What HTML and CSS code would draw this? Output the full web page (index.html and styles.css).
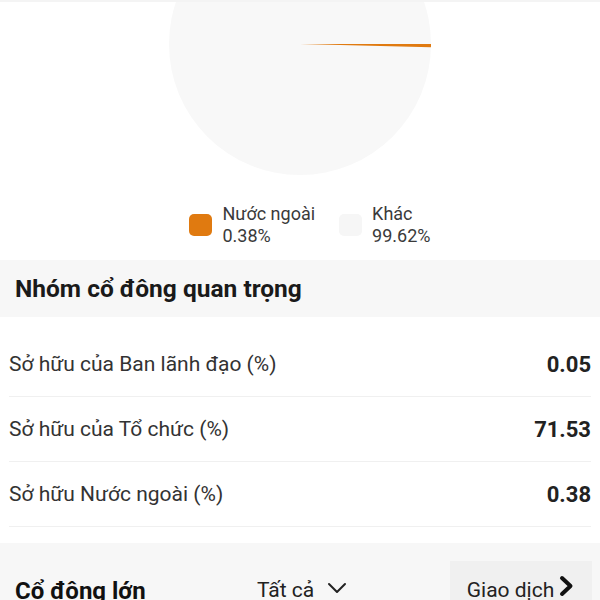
FILE: index.html
```html
<!DOCTYPE html>
<html lang="vi">
<head>
  <meta charset="UTF-8" />
  <title>Cổ đông</title>
  <meta name="viewport" content="width=device-width, initial-scale=1" />
  <link rel="stylesheet" href="styles.css">
</head>
<body>
  <div class="pie-wrap">
    <svg class="pie" width="262" height="262" viewBox="0 0 262 262">
      <circle cx="131" cy="131" r="131" fill="#f8f8f8" />
      <!-- 0.38% wedge -->
      <path d="M131 131 L262 131 A131 131 0 0 1 261.96 134.13 Z" fill="#e07a10" />
    </svg>
  </div>

  <div class="legend">
    <div class="legend-item">
      <span class="swatch orange"></span>
      <div class="legend-text">
        <div>Nước ngoài</div>
        <div>0.38%</div>
      </div>
    </div>
    <div class="legend-item">
      <span class="swatch grey"></span>
      <div class="legend-text">
        <div>Khác</div>
        <div>99.62%</div>
      </div>
    </div>
  </div>

  <div class="section-head">Nhóm cổ đông quan trọng</div>

  <div class="rows">
    <div class="row"><span>Sở hữu của Ban lãnh đạo (%)</span><b>0.05</b></div>
    <div class="row"><span>Sở hữu của Tổ chức (%)</span><b>71.53</b></div>
    <div class="row"><span>Sở hữu Nước ngoài (%)</span><b>0.38</b></div>
  </div>

  <div class="big-holders">
    <div class="bh-title">Cổ đông lớn</div>
    <div class="bh-filter">Tất cả
      <svg width="20" height="12" viewBox="0 0 20 12"><path d="M2 2 L10 10 L18 2" fill="none" stroke="#222" stroke-width="2" stroke-linecap="round" stroke-linejoin="round" /></svg>
    </div>
    <div class="bh-trade">Giao dịch
      <svg width="17" height="22" viewBox="0 0 17 22"><path d="M4 3 L12.5 11 L4 19" fill="none" stroke="#111" stroke-width="4" stroke-linecap="round" stroke-linejoin="round" /></svg>
    </div>
  </div>
</body>
</html>
```

FILE: styles.css
```css
body {
  margin: 0;
  background: #fff;
  font-family: Roboto, "Noto Sans", sans-serif;
  color: #222;
  overflow: hidden;
}
.pie-wrap {
  height: 175px;
  overflow: hidden;
  display: flex;
  justify-content: center;
  border-top: 2px solid #f4f4f4;
  box-sizing: border-box;
}
.pie {
  margin-top: -89px;
  flex-shrink: 0;
}
.legend {
  display: flex;
  justify-content: center;
  gap: 24px;
  margin-top: 28px;
  padding-left: 20px;
}
.legend-item {
  display: flex;
  align-items: center;
  gap: 10px;
}
.swatch {
  width: 23px;
  height: 22px;
  border-radius: 5px;
}
.swatch.orange {
  background: #e07a10;
}
.swatch.grey {
  background: #f6f6f6;
}
.legend-text {
  font-size: 18px;
  line-height: 22px;
  color: #3a3a3a;
}
.section-head {
  margin-top: 13px;
  height: 57px;
  background: #f7f7f7;
  display: flex;
  align-items: center;
  padding: 0 15px;
  font-size: 24.5px;
  font-weight: 700;
  color: #1a1a1a;
}
.rows {
  padding: 15px 9px 0 9px;
}
.row {
  height: 64px;
  display: flex;
  align-items: center;
  justify-content: space-between;
  border-bottom: 1px solid #f0f0f0;
  font-size: 21px;
  color: #333;
}
.row b {
  font-size: 22px;
  font-weight: 700;
  color: #222;
}
.big-holders {
  margin-top: 16px;
  background: #f7f7f7;
  display: flex;
  align-items: stretch;
  padding: 18px 8px 0 15px;
  height: 60px;
  box-sizing: border-box;
}
.bh-title {
  font-size: 24px;
  font-weight: 700;
  color: #111;
  width: 242px;
  padding-top: 16px;
}
.bh-filter {
  font-size: 21px;
  color: #222;
  display: flex;
  align-items: flex-start;
  gap: 13px;
  flex: 1;
  padding-top: 17px;
}
.bh-filter svg {
  margin-top: 4px;
}
.bh-trade {
  background: #f0f0f0;
  width: 142px;
  display: flex;
  align-items: flex-start;
  justify-content: center;
  gap: 4px;
  font-size: 21px;
  color: #222;
  padding-top: 17px;
  box-sizing: border-box;
}
.bh-trade svg {
  margin-top: -3px;
}
```
